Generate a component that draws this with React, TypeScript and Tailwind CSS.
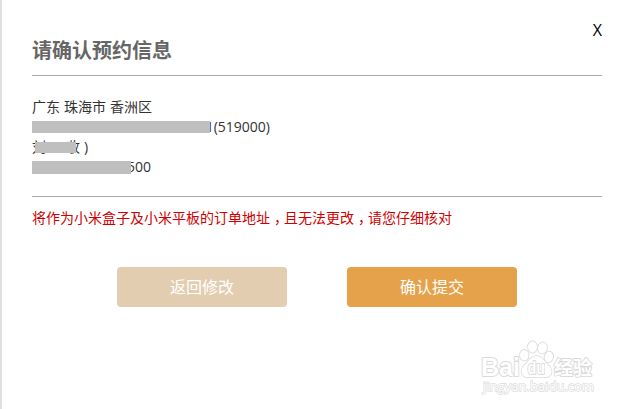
const Mask = ({ className }: { className: string }) => (
  <span className={`absolute left-0 bg-[#bfbfbf] ${className}`} />
);

const Comma = () => <span className="pr-[3px] pl-1 [font-feature-settings:'halt']">，</span>;

const Button = ({ label, className }: { label: string; className: string }) => (
  <button
    className={`flex h-10 w-[170px] items-center justify-center rounded text-base text-white ${className}`}
  >
    {label}
  </button>
);

const Watermark = () => (
  <svg
    className="absolute right-[30px] bottom-[13px]"
    width="120"
    height="60"
    viewBox="0 0 120 60"
    fill="#fff"
    stroke="#dadada"
    strokeWidth="1.8"
    paintOrder="stroke"
    strokeLinejoin="round"
    fontFamily="'Liberation Sans', 'Noto Sans CJK SC', sans-serif"
    fontWeight="700"
  >
    <text x="3" y="40" fontSize="25" textLength="39" lengthAdjust="spacingAndGlyphs">
      Bai
    </text>
    <g strokeWidth="1.700">
      <path d="M58.500 20c5 0 7 4 10.500 7.500 3 3 5 5.500 4.500 9-.5 3.500-4 5-8 4.500H51.500c-4 .5-7.500-1-8-4.500-.4-3.500 1.500-6 4.500-9 3.500-3.500 5.500-7.500 10.500-7.500z" />
      <ellipse cx="46.300" cy="19.200" rx="4.300" ry="5.300" />
      <ellipse cx="54.500" cy="11" rx="4.500" ry="5.700" />
      <ellipse cx="64.500" cy="12" rx="4.500" ry="5.500" transform="rotate(12 64.500 12)" />
      <ellipse cx="70.800" cy="21" rx="4.200" ry="5.300" transform="rotate(12 70.800 21)" />
    </g>
    <text x="49.500" y="38" fontSize="17.500" textLength="17.500" lengthAdjust="spacingAndGlyphs">
      du
    </text>
    <text x="76" y="39" fontSize="19" textLength="38">
      经验
    </text>
    <text
      x="5"
      y="55"
      fontSize="13"
      textLength="111"
      lengthAdjust="spacingAndGlyphs"
      strokeWidth="1.300"
      fontWeight="400"
      fontFamily="'Open Sans', sans-serif"
    >
      jingyan.baidu.com
    </text>
  </svg>
);

export default function App() {
  return (
    <div className="relative flex h-[409px] w-[628px] flex-col overflow-hidden border-l-2 border-[#e0e0e0] bg-white pr-[26px] pl-[30px] font-['Open_Sans','Noto_Sans_CJK_SC',sans-serif] text-[#333]">
      <header className="flex h-[76px] items-start justify-between border-b border-[#aaa] pt-5">
        <h1 className="pt-4 text-xl leading-[30px] font-bold text-[#666]">请确认预约信息</h1>
        <button className="text-base leading-5 text-black">X</button>
      </header>

      <div className="flex h-[121px] flex-col border-b border-[#aaa] pt-[21px] text-sm leading-5">
        <p className="[word-spacing:0.4px]">广东 珠海市 香洲区</p>
        <p className="relative flex w-[238px] justify-end">
          1(519000)
          <Mask className="top-1 h-3 w-[178px]" />
        </p>
        <p className="relative flex">
          <span className="w-[34px]">刘</span>
          <span className="w-[18px]">收</span>
          <span>)</span>
          <Mask className="top-[5px] ml-[3px] h-[11px] w-[41px]" />
        </p>
        <p className="relative flex w-[119px] justify-end">
          500
          <Mask className="top-1 h-[13px] w-[99px]" />
        </p>
      </div>

      <p className="pt-[11px] text-sm leading-5 text-[#d00000]">
        将作为小米盒子及小米平板的订单地址
        <Comma />
        且无法更改
        <Comma />
        请您仔细核对
      </p>

      <div className="flex justify-center gap-[60px] pt-[39px]">
        <Button label="返回修改" className="bg-[#e3cdb0]" />
        <Button label="确认提交" className="bg-[#e5a24a]" />
      </div>

      <Watermark />
    </div>
  );
}
